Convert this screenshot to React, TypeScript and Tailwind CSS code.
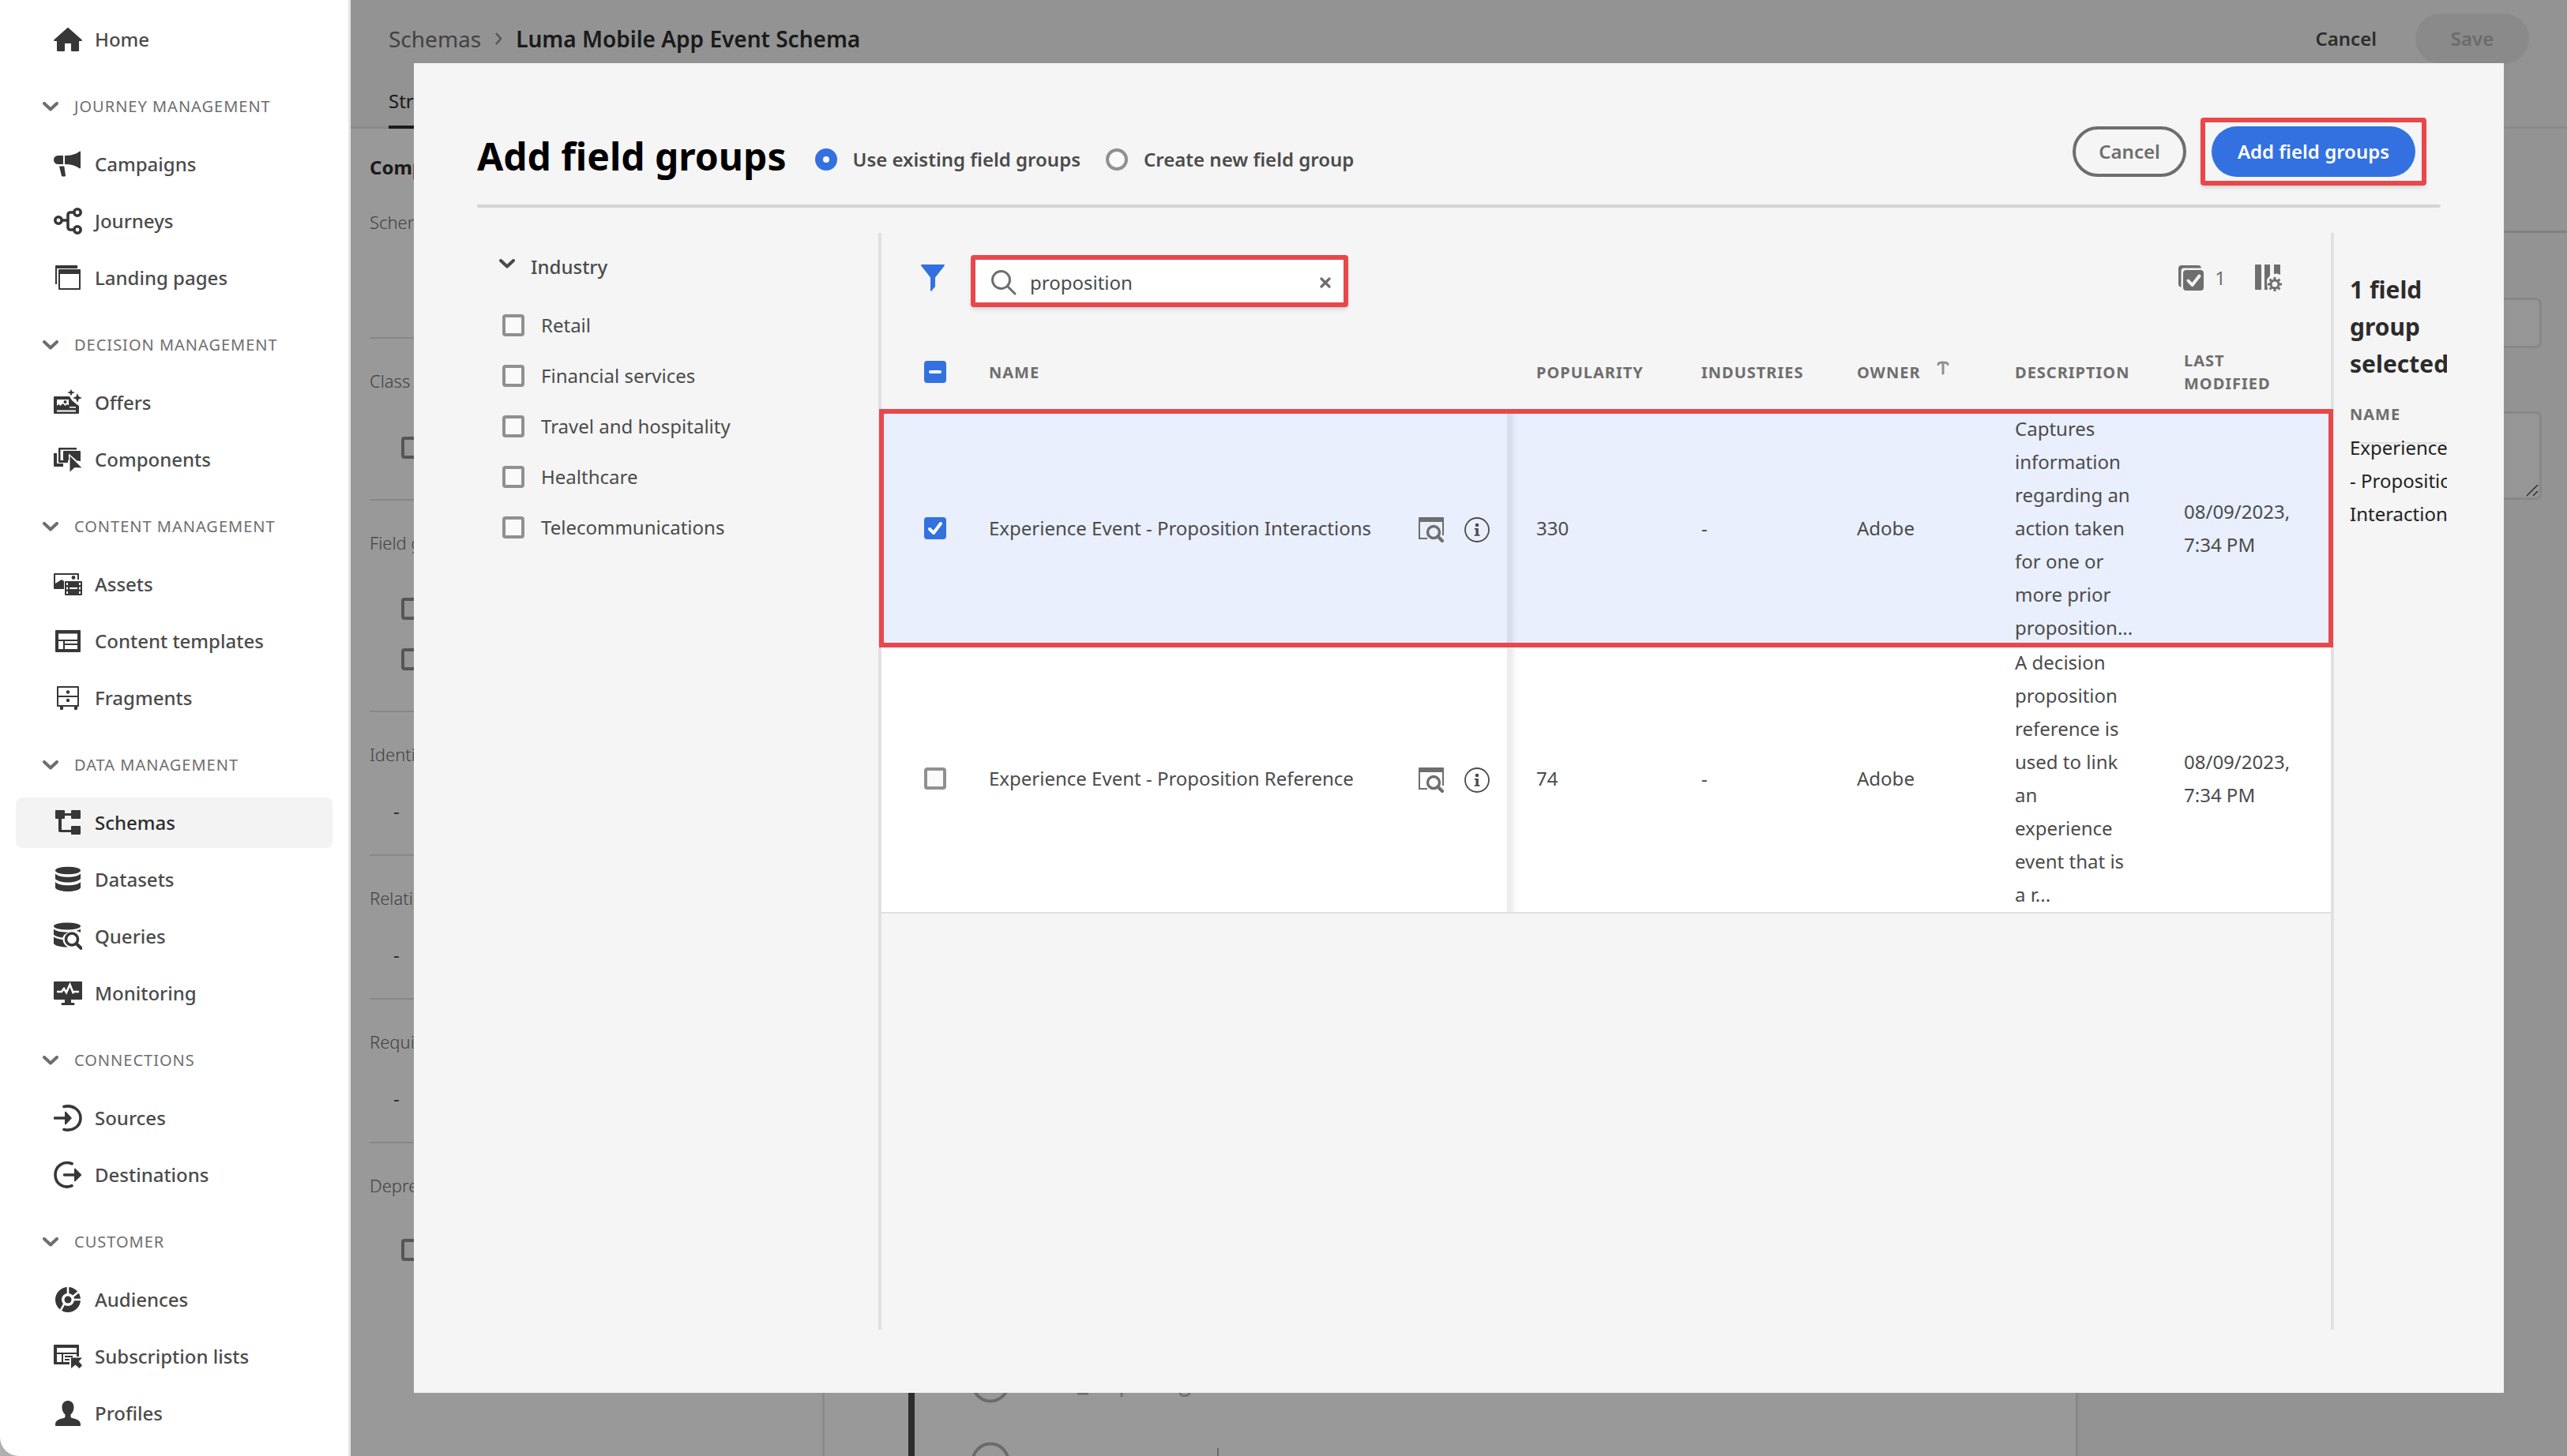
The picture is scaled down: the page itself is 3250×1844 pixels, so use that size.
import React from "react";

type IconProps = { className?: string };
type Icon = (p: IconProps) => React.ReactElement;

const make =
  (children: React.ReactNode): Icon =>
  ({ className = "size-9 shrink-0 text-[#373737]" }) => (
    <svg viewBox="0 0 36 36" className={className} fill="currentColor" aria-hidden="true">
      {children}
    </svg>
  );

const HomeIcon = make(<path d="M18.6 3.3a1 1 0 0 0-1.3 0L.5 18.2c-.7.7-.3 1.8.7 1.8H4v12a1 1 0 0 0 1 1h8a1 1 0 0 0 1-1v-9h8v9a1 1 0 0 0 1 1h8a1 1 0 0 0 1-1V20h2.8c1 0 1.400-1.100.7-1.800z" />);
const CampaignsIcon = make(
  <>
    <path d="M12 7H5.500a5.500 5.500 0 0 0 0 11H12z" />
    <path d="M14 7c7.500 0 14-1.500 18.700-5.300.6-.4 1.300 0 1.300.7v20.200c0 .7-.7 1-1.300.6C28 19.800 21.500 18 14 18z" />
    <path d="M7 20.500h6.300l1.700 12a.9.9 0 0 1-.9 1H11a1 1 0 0 1-1-.8z" />
  </>
);
const JourneysIcon = make(
  <g fill="none" stroke="currentColor" strokeWidth="3.600">
    <circle cx="6" cy="17" r="4.200" />
    <circle cx="30" cy="7" r="4.200" />
    <circle cx="30" cy="29" r="4.200" />
    <path d="M10 17h8M26 7h-5a3 3 0 0 0-3 3v16a3 3 0 0 0 3 3h5" />
  </g>
);
const LandingIcon = make(
  <>
    <path d="M2 26V3a1 1 0 0 1 1-1h27v4H4v20z" />
    <path fillRule="evenodd" d="M7 7h26a1 1 0 0 1 1 1v24a1 1 0 0 1-1 1H7a1 1 0 0 1-1-1V8a1 1 0 0 1 1-1zm1 6v18h24V13z" />
  </>
);
const OffersIcon = make(
  <>
    <path d="M1 10h19l3 5 6 5 3 2v9a1 1 0 0 1-1 1H1a1 1 0 0 1-1-1V11a1 1 0 0 1 1-1z" />
    <path fill="#fff" d="M4 14h15v7.500l-2-1.500-2.500 2-3-3-3 3-2-2L4 22zM4 27.500h24v2H4zM20 23h8v1.500h-8z" />
    <circle cx="14.500" cy="17" r="2" />
    <path d="M22 1l1.500 3 3.500 1-3.500 1.300L22 9.500l-1.500-3.200L17 5l3.500-1zM30 6l1.700 4.200L36 12l-4.300 1.500L30 18l-1.700-4.500L24 12l4.300-1.800z" />
  </>
);
const ComponentsIcon = make(
  <>
    <path d="M0 10h4v13h8v4H1a1 1 0 0 1-1-1z" />
    <path d="M6 21V4a1 1 0 0 1 1-1h22v2.500H8.500V19H18v3H7a1 1 0 0 1-1-1z" />
    <path d="M13 7h20a1 1 0 0 1 1 1v12l-4.500-.5L19 10.500V19h-6a1 1 0 0 1-1-1V8a1 1 0 0 1 1-1z" />
    <path d="M20.500 13.500v20l6-5.500 9 .5z" />
  </>
);
const AssetsIcon = make(
  <>
    <path fillRule="evenodd" d="M1 4h30a1 1 0 0 1 1 1v7h-2V6H2v11l8-5 3 2v10H1a1 1 0 0 1-1-1V5a1 1 0 0 1 1-1z" />
    <circle cx="25" cy="9.500" r="2.400" />
    <path d="M15 14h20a1 1 0 0 1 1 1v16a1 1 0 0 1-1 1H15a1 1 0 0 1-1-1V15a1 1 0 0 1 1-1z" />
    <path fill="#fff" d="M16 16h2v3h-2zM16 21.500h2v3h-2zM16 27h2v3h-2zM32 16h2v3h-2zM32 21.500h2v3h-2zM32 27h2v3h-2zM20 22h10v2H20z" />
  </>
);
const TemplatesIcon = make(
  <path fillRule="evenodd" d="M3 4h30a1 1 0 0 1 1 1v26a1 1 0 0 1-1 1H3a1 1 0 0 1-1-1V5a1 1 0 0 1 1-1zm3 4.500V16h24V8.500zM6 18v10h6V18zm8 0v3h16v-3zm0 5v5h16v-5z" />
);
const FragmentsIcon = make(
  <>
    <path fillRule="evenodd" d="M5 3h26a1 1 0 0 1 1 1v24a1 1 0 0 1-1 1h-1v3a1 1 0 0 1-1 1h-2a1 1 0 0 1-1-1v-3H12v3a1 1 0 0 1-1 1H9a1 1 0 0 1-1-1v-3H5a1 1 0 0 1-1-1V4a1 1 0 0 1 1-1zm1 2v10h24V5zm0 12v10h24V17z" />
    <circle cx="18" cy="10.500" r="2.200" />
    <circle cx="18" cy="21" r="2.200" />
  </>
);
const SchemasIcon = make(
  <>
    <path d="M3 2h10a1 1 0 0 1 1 1v3h8V3a1 1 0 0 1 1-1h10a1 1 0 0 1 1 1v9a1 1 0 0 1-1 1H23a1 1 0 0 1-1-1V9h-8v3a1 1 0 0 1-1 1h-3v14h12v-4a1 1 0 0 1 1-1h10a1 1 0 0 1 1 1v9a1 1 0 0 1-1 1H23a1 1 0 0 1-1-1v-2H8a2 2 0 0 1-2-2V13H3a1 1 0 0 1-1-1V3a1 1 0 0 1 1-1z" />
  </>
);
const DatasetsIcon = make(
  <>
    <ellipse cx="18" cy="6.500" rx="16" ry="4.800" />
    <path d="M2 10.500c3 3 9 4.300 16 4.300s13-1.300 16-4.300V17c-2 2.700-8.500 4.500-16 4.500S4 19.700 2 17z" />
    <path d="M2 21c3 3 9 4.300 16 4.300S31 24 34 21v7.500c-2 2.800-8.500 4.500-16 4.500S4 31.300 2 28.500z" />
  </>
);
const QueriesIcon = make(
  <>
    <ellipse cx="17" cy="5" rx="17" ry="4.500" />
    <path d="M0 8.500c3 3 9.500 4 17 4h2c-4 1.500-7 4-7.500 7C6 19 1.500 17.500 0 15.500zM34 8.500V13c-1.500-1-3.500-1.700-6-2 2.500-.5 4.500-1.300 6-2.500zM0 18.500c2.500 2 7 3.200 11.500 3.400.3 4 2.500 7.600 6.500 9.600C9 31.600 2 30 0 27z" />
    <circle cx="23" cy="21.500" r="7.500" fill="none" stroke="currentColor" strokeWidth="3.600" />
    <path d="M28.500 27l6 5.800" stroke="currentColor" strokeWidth="4.200" strokeLinecap="round" />
  </>
);
const MonitoringIcon = make(
  <>
    <path d="M1 3h34a1 1 0 0 1 1 1v21a1 1 0 0 1-1 1H22v4h3a1.500 1.500 0 0 1 1.500 1.500c0 1-.5 1.500-1.500 1.500H11c-1 0-1.500-.5-1.500-1.500A1.500 1.500 0 0 1 11 30h3v-4H1a1 1 0 0 1-1-1V4a1 1 0 0 1 1-1z" />
    <path d="M4 16h6l3-4 3 5 4.500-10 4 10 1.500-1h6" fill="none" stroke="#fff" strokeWidth="2.600" />
  </>
);
const SourcesIcon = make(
  <>
    <path d="M13 3.500c11-2.500 21 4 21 14.500S24 35 13 32.500" fill="none" stroke="currentColor" strokeWidth="3.600" strokeLinecap="round" />
    <path d="M1.500 16.200H14v-5.400c0-.9 1-1.300 1.600-.7L23 18l-7.400 7.900c-.6.600-1.600.200-1.600-.700v-5.400H1.500a1.800 1.800 0 0 1 0-3.600z" />
  </>
);
const DestinationsIcon = make(
  <>
    <path d="M23 3.800C12-.5 2 7 2 18s10 18 21 13.800" fill="none" stroke="currentColor" strokeWidth="3.600" strokeLinecap="round" />
    <path d="M13.500 16.200H26v-5.400c0-.9 1-1.300 1.600-.7L35.500 18l-7.900 7.900c-.6.600-1.600.200-1.600-.700v-5.400H13.500a1.800 1.800 0 0 1 0-3.600z" />
  </>
);
const AudiencesIcon = make(
  <>
    <circle cx="18" cy="18" r="12" fill="none" stroke="currentColor" strokeWidth="8" />
    <circle cx="18" cy="18" r="4.500" />
    <path d="M18 0v12M23 15l10-8M24 18h12M14 22l-6 11" stroke="#fff" strokeWidth="2.600" fill="none" />
  </>
);
const SubscriptionIcon = make(
  <>
    <path fillRule="evenodd" d="M1 3h30a1 1 0 0 1 1 1v14h-3v-3H4v10h6v3H1a1 1 0 0 1-1-1V4a1 1 0 0 1 1-1zm3 4v6h25V7z" />
    <path d="M10 15h2v10h8v3H8v-3h2zM14 17h10v2H14zM14 21h6v2h-6z" />
    <path d="M22 19.500h14l-4.300 4.700 4.300 5-3.500 3.800-5-4.500L22 33z" />
  </>
);
const ProfilesIcon = make(
  <path d="M18 2c4.800 0 7.500 3.500 7.500 8.500 0 3.300-1.500 7-4 9V22c.2 1 .6 1.600 2 2 5.500 1.200 10.500 3 10.500 8v1a1 1 0 0 1-1 1H3a1 1 0 0 1-1-1v-1c0-5 5-6.800 10.500-8 1.400-.4 1.800-1 2-2v-2.500c-2.500-2-4-5.700-4-9C10.500 5.500 13.200 2 18 2z" />
);

const Chevron = ({ className }: IconProps) => (
  <svg viewBox="0 0 20 12" className={className} fill="none" stroke="currentColor" strokeWidth="4" strokeLinecap="round" strokeLinejoin="round" aria-hidden="true">
    <path d="M2 2l8 7.500L18 2" />
  </svg>
);

const groups: { title?: string; items: [string, Icon][] }[] = [
  { items: [["Home", HomeIcon]] },
  { title: "JOURNEY MANAGEMENT", items: [["Campaigns", CampaignsIcon], ["Journeys", JourneysIcon], ["Landing pages", LandingIcon]] },
  { title: "DECISION MANAGEMENT", items: [["Offers", OffersIcon], ["Components", ComponentsIcon]] },
  { title: "CONTENT MANAGEMENT", items: [["Assets", AssetsIcon], ["Content templates", TemplatesIcon], ["Fragments", FragmentsIcon]] },
  { title: "DATA MANAGEMENT", items: [["Schemas", SchemasIcon], ["Datasets", DatasetsIcon], ["Queries", QueriesIcon], ["Monitoring", MonitoringIcon]] },
  { title: "CONNECTIONS", items: [["Sources", SourcesIcon], ["Destinations", DestinationsIcon]] },
  { title: "CUSTOMER", items: [["Audiences", AudiencesIcon], ["Subscription lists", SubscriptionIcon], ["Profiles", ProfilesIcon]] },
];

function Sidebar() {
  return (
    <nav className="flex w-[444px] shrink-0 flex-col gap-2 rounded-bl-[24px] border-r-3 border-[#e4e4e4] bg-white px-5 pt-[18px]">
      {groups.map((g, i) => (
        <React.Fragment key={i}>
          {g.title && (
            <button className="mt-3 flex h-[66px] items-center gap-5 pl-[34px] text-left text-[20px] tracking-wider text-[#6e6e6e]">
              <Chevron className="h-3 w-5" />
              {g.title}
            </button>
          )}
          {g.items.map(([label, Glyph]) => (
            <a
              key={label}
              href="#"
              className={
                label === "Schemas"
                  ? "flex h-16 items-center gap-4 rounded-lg bg-[#f3f3f3] pl-12 text-[24px] font-medium text-[#2c2c2c]"
                  : "flex h-16 items-center gap-4 rounded-lg pl-12 text-[24px] font-medium text-[#4b4b4b]"
              }
            >
              <Glyph />
              {label}
            </a>
          ))}
        </React.Fragment>
      ))}
    </nav>
  );
}

function Check({ state = "off", label, hidden }: { state?: "off" | "on" | "mixed"; label: string; hidden?: boolean }) {
  return (
    <label className="flex items-center gap-[21px]">
      <span className="relative flex size-7 shrink-0">
        <input
          type="checkbox"
          aria-label={label}
          defaultChecked={state === "on"}
          className={
            state === "off"
              ? "size-7 appearance-none rounded-[4px] border-4 border-[#909090] bg-[#fafafa]"
              : "size-7 appearance-none rounded-[4px] bg-[#3371e0]"
          }
        />
        {state !== "off" && (
          <svg viewBox="0 0 28 28" className="pointer-events-none absolute inset-0" fill="none" stroke="#fff" strokeWidth="4" strokeLinecap="round" strokeLinejoin="round" aria-hidden="true">
            <path d={state === "on" ? "M7 15l5 5 9-12" : "M8 14h12"} />
          </svg>
        )}
      </span>
      {!hidden && label}
    </label>
  );
}

const Rule = () => <div className="h-[2px] bg-[#e1e1e1]" />;

function Backdrop() {
  const label = "flex h-[107px] items-center text-[22px] font-light text-[#6e6e6e]";
  return (
    <div className="flex flex-1 flex-col bg-[#f5f5f5]">
      <header className="flex h-[97px] items-center pr-12 pl-[48px] text-[28px]">
        <a href="#" className="text-[#6e6e6e]">Schemas</a>
        <svg viewBox="0 0 10 16" className="mx-[17px] h-4 w-[10px]" fill="none" stroke="#909090" strokeWidth="2.500" aria-hidden="true">
          <path d="M2 1l6 7-6 7" />
        </svg>
        <h1 className="font-semibold text-[#2c2c2c]">Luma Mobile App Event Schema</h1>
        <button className="ml-auto h-16 px-[49px] text-[24px] font-semibold text-[#4b4b4b]">Cancel</button>
        <button className="h-16 w-36 rounded-full bg-[#e6e6e6] text-[24px] font-semibold text-[#b3b3b3]">Save</button>
      </header>
      <div className="flex h-[66px] border-b-3 border-[#e6e6e6] pl-[48px]">
        <button className="h-[66px] border-b-4 border-[#2c2c2c] text-[24px] text-[#2c2c2c]">Structure</button>
      </div>
      <div className="flex flex-1">
        <aside className="w-[600px] shrink-0 border-r-3 border-[#e6e6e6] bg-white pl-6">
          <h2 className="flex h-[98px] items-center text-[24px] font-bold text-[#2c2c2c]">Composition</h2>
          <div className="flex h-[166px] items-start pt-1 text-[22px] font-light text-[#6e6e6e]">Schema</div>
          <Rule />
          <div className={label}>Class</div>
          <div className="flex h-[96px] items-start pt-[17px] pl-10"><Check label="Class selection" hidden /></div>
          <Rule />
          <div className={label}>Field groups</div>
          <div className="flex h-[159px] flex-col gap-9 pt-4 pl-10">
            <Check label="First field group" hidden />
            <Check label="Second field group" hidden />
          </div>
          {["Identities", "Relationships", "Required fields"].map((t) => (
            <React.Fragment key={t}>
              <Rule />
              <div className={label}>{t}</div>
              <div className="h-[73px] pl-[30px] text-[24px] text-[#4b4b4b]">-</div>
            </React.Fragment>
          ))}
          <Rule />
          <div className={label}>Deprecated fields</div>
          <div className="pt-[14px] pl-10"><Check label="Deprecated" hidden /></div>
        </aside>
        <div className="flex flex-1 items-end bg-white">
          <svg viewBox="0 0 600 80" className="h-20 w-[600px]" fill="none" stroke="#b3b3b3" aria-hidden="true">
            <path d="M110 0v80" stroke="#4b4b4b" strokeWidth="8" />
            <g strokeWidth="4">
              <circle cx="210" cy="-12" r="22.500" />
              <circle cx="210" cy="87" r="22.500" />
            </g>
            <path d="M320 1h14" strokeWidth="3" />
            <path d="M376 0v5M450 0c1 5 11 5 12 0" strokeWidth="2.500" />
            <path d="M498 70v10" strokeWidth="2" />
          </svg>
        </div>
        <aside className="w-[622px] shrink-0 border-l-3 border-[#e1e1e1]">
          <div className="h-[132px] border-b-3 border-[#d8d8d8]" />
          <div className="flex flex-col gap-20 pt-[82px] pr-8 pl-8">
            <input aria-label="Display name" className="h-16 w-full rounded-lg border-3 border-[#e1e1e1] bg-[#fafafa]" />
            <div className="relative flex">
              <textarea aria-label="Schema description" className="h-28 w-full resize-none rounded-lg border-3 border-[#e1e1e1] bg-[#fafafa]" />
              <svg viewBox="0 0 16 16" className="absolute right-1 bottom-1 size-4" stroke="#4b4b4b" strokeWidth="1.500" aria-hidden="true">
                <path d="M1 15L15 1M9 15l6-6" />
              </svg>
            </div>
          </div>
        </aside>
      </div>
    </div>
  );
}

function Radio({ label, checked }: { label: string; checked?: boolean }) {
  return (
    <label className="flex items-center gap-5 text-[24px] font-semibold text-[#4b4b4b]">
      <input
        type="radio"
        name="mode"
        defaultChecked={checked}
        className="size-7 appearance-none rounded-full border-4 border-[#909090] bg-[#fafafa] checked:border-[10px] checked:border-[#3371e0] checked:bg-white"
      />
      {label}
    </label>
  );
}

function PreviewIcon() {
  return (
    <svg viewBox="0 0 32 32" className="size-8" fill="none" aria-hidden="true">
      <path d="M0 1a1 1 0 0 1 1-1h30a1 1 0 0 1 1 1v5H0z" fill="#6e6e6e" />
      <path d="M1 5v22h10M31 5v18" stroke="#6e6e6e" strokeWidth="2" />
      <circle cx="19" cy="19" r="7.500" stroke="#6e6e6e" strokeWidth="3.400" />
      <path d="M24.500 24.500l5.500 5.500" stroke="#6e6e6e" strokeWidth="4.200" strokeLinecap="round" />
    </svg>
  );
}

function InfoIcon() {
  return (
    <svg viewBox="0 0 32 32" className="size-8" fill="#4b4b4b" aria-hidden="true">
      <circle cx="16" cy="16" r="15" fill="none" stroke="#4b4b4b" strokeWidth="1.800" />
      <circle cx="16" cy="10" r="2.300" />
      <path d="M12.800 14h5v8h1.700v1.800h-6.700V22h1.700v-6.200h-1.700z" />
    </svg>
  );
}

const rows = [
  { name: "Experience Event - Proposition Interactions", popularity: "330", description: "Captures information regarding an action taken for one or more prior proposition...", selected: true },
  { name: "Experience Event - Proposition Reference", popularity: "74", description: "A decision proposition reference is used to link an experience event that is a r...", selected: false },
];

function FieldGroupTable() {
  return (
    <table className="mt-8 w-full table-fixed border-collapse text-left">
      <colgroup>
        <col className="w-[136px]" />
        <col />
        <col className="w-[246px]" />
        <col className="w-[197px]" />
        <col className="w-[200px]" />
        <col className="w-[214px]" />
        <col className="w-[186px]" />
      </colgroup>
      <thead>
        <tr className="h-[100px] text-[20px] leading-[29px] tracking-wider text-[#6e6e6e] [&>th]:p-0 [&>th]:font-bold">
          <th><div className="pl-[54px]"><Check state="mixed" label="Select all" hidden /></div></th>
          <th>NAME</th>
          <th><div className="pl-[37px]">POPULARITY</div></th>
          <th>INDUSTRIES</th>
          <th>
            <div className="flex gap-5">
              OWNER
              <svg viewBox="0 0 16 18" className="h-[18px] w-4" fill="none" stroke="#909090" strokeWidth="3" strokeLinecap="round" aria-hidden="true">
                <path d="M8 16V3M2 4.500C2 3 4 2 8 2s6 1 6 2.500" />
              </svg>
            </div>
          </th>
          <th>DESCRIPTION</th>
          <th><div className="w-[140px]">LAST MODIFIED</div></th>
        </tr>
      </thead>
      <tbody className="border-b-2 border-[#e1e1e1]">
        {rows.map((r) => (
          <tr
            key={r.name}
            className={
              r.selected
                ? "bg-[#e9effc] text-[24px] leading-[42px] text-[#4b4b4b] outline-6 -outline-offset-3 outline-[#e8484b] [&>td]:p-0"
                : "bg-white text-[24px] leading-[42px] text-[#4b4b4b] [&>td]:p-0"
            }
          >
            <td><div className="pl-[54px]"><Check state={r.selected ? "on" : "off"} label={"Select " + r.name} hidden /></div></td>
            <td>
              <div className="flex items-center gap-[26px] pr-[22px]">
                <span className="mr-auto">{r.name}</span>
                <button aria-label="Preview" className="pt-1"><PreviewIcon /></button>
                <button aria-label="Information" className="pt-1"><InfoIcon /></button>
              </div>
            </td>
            <td className="bg-[linear-gradient(to_right,rgba(0,0,0,0.08)_0px,rgba(0,0,0,0.07)_5px,rgba(0,0,0,0.02)_10px,rgba(0,0,0,0)_16px)]"><div className="pl-[37px]">{r.popularity}</div></td>
            <td>-</td>
            <td>Adobe</td>
            <td><div className="w-[154px] py-px">{r.description}</div></td>
            <td>08/09/2023, 7:34 PM</td>
          </tr>
        ))}
      </tbody>
    </table>
  );
}

function Dialog() {
  return (
    <div role="dialog" aria-label="Add field groups" className="flex flex-1 flex-col bg-[#f5f5f5] px-20 pt-[69px] pb-20">
      <header className="flex items-center">
        <div className="flex items-center pt-5">
          <h2 className="mr-9 pb-2 text-[48px] leading-[56px] font-bold text-black">Add field groups</h2>
          <div className="flex gap-8">
            <Radio label="Use existing field groups" checked />
            <Radio label="Create new field group" />
          </div>
        </div>
        <button className="mr-[18px] ml-auto h-16 w-36 rounded-full border-4 border-[#6e6e6e] text-[24px] font-semibold text-[#6e6e6e]">Cancel</button>
        <div className="mr-[18px] rounded-[4px] border-6 border-[#e8484b] px-2 py-[5px] shadow-md">
          <button className="h-16 w-[258px] rounded-full bg-[#3371e0] text-[24px] font-semibold whitespace-nowrap text-white">Add field groups</button>
        </div>
      </header>
      <div className="mt-6 h-1 rounded-full bg-[#d5d5d5]" />
      <div className="-mr-2 flex flex-1 pt-8">
        <aside className="w-[508px] shrink-0 pt-[18px] pl-7 text-[24px] text-[#4b4b4b]">
          <button className="flex h-[50px] items-center gap-5 text-[24px] font-medium">
            <Chevron className="-mt-2 h-3 w-5" />
            Industry
          </button>
          <div className="mt-[17px] flex flex-col pl-1">
            {["Retail", "Financial services", "Travel and hospitality", "Healthcare", "Telecommunications"].map((t) => (
              <div key={t} className="flex h-16 items-center"><Check label={t} /></div>
            ))}
          </div>
        </aside>
        <section className="min-w-0 flex-1 border-x-4 border-[#e1e1e1] pt-7">
          <div className="flex items-start pl-[50px]">
            <div className="flex h-[58px] w-[63px] items-center">
              <button aria-label="Filter">
                <svg viewBox="0 0 30 34" className="h-[34px] w-[30px]" fill="#3371e0" aria-hidden="true">
                  <path d="M1 0h28c1 0 1.300.8.8 1.500L18 16.500V28l-4.600 5.500c-.5.600-1.400.300-1.400-.5V16.500L.2 1.500C-.3.800 0 0 1 0z" />
                </svg>
              </button>
            </div>
            <div className="flex h-[66px] w-[478px] items-center rounded-[4px] border-6 border-[#e8484b] bg-white pt-1 pr-4 pl-5 shadow-md">
              <svg viewBox="0 0 32 32" className="size-8 shrink-0" fill="none" stroke="#6e6e6e" strokeWidth="3" strokeLinecap="round" aria-hidden="true">
                <circle cx="12.500" cy="12.500" r="11" />
                <path d="M20.500 20.500L30 30" />
              </svg>
              <input aria-label="Search" defaultValue="proposition" className="ml-[17px] w-0 min-w-0 flex-1 bg-transparent text-[24px] text-[#4b4b4b] outline-none" />
              <button aria-label="Clear search">
                <svg viewBox="0 0 14 14" className="size-[14px]" stroke="#6e6e6e" strokeWidth="3.200" strokeLinecap="round" aria-hidden="true">
                  <path d="M2 2l10 10M12 2L2 12" />
                </svg>
              </button>
            </div>
            <div className="mr-[62px] ml-auto flex h-[58px] items-center text-[24px] text-[#6e6e6e]">
              <svg viewBox="0 0 32 32" className="size-8" fill="#6e6e6e" aria-hidden="true">
                <path d="M4 0h21a4 4 0 0 1 4 3.500H7A3.500 3.500 0 0 0 3.500 7v20.500A4 4 0 0 1 0 24V4a4 4 0 0 1 4-4z" />
                <rect x="6" y="6" width="26" height="26" rx="4" />
                <path d="M12.500 19.500l5 5.500 9-11.500" fill="none" stroke="#f5f5f5" strokeWidth="4" strokeLinecap="round" strokeLinejoin="round" />
              </svg>
              <span className="ml-[14px]">1</span>
              <button aria-label="Column settings" className="ml-[37px]">
                <svg viewBox="0 0 34 34" className="size-[34px]" fill="#6e6e6e" aria-hidden="true">
                  <path d="M1 0h6a1 1 0 0 1 1 1v31H1a1 1 0 0 1-1-1V1a1 1 0 0 1 1-1zM12 0h7v14l-4 5v5l1 8h-4zM24 0h7a1 1 0 0 1 1 1v12l-4-1.500-4 .5z" />
                  <circle cx="25" cy="25" r="5" fill="none" stroke="#6e6e6e" strokeWidth="3" />
                  <path d="M25 16v3M25 31v3M16 25h3M31 25h3M18.600 18.600l2.200 2.200M29.200 29.200l2.200 2.200M18.600 31.400l2.200-2.200M29.200 20.800l2.200-2.200" stroke="#6e6e6e" strokeWidth="3" />
                </svg>
              </button>
            </div>
          </div>
          <FieldGroupTable />
        </section>
        <aside className="w-[143px] shrink-0 overflow-hidden pt-12 pl-5">
          <h3 className="text-[30px] leading-[47px] font-bold text-[#2c2c2c]">1 field group selected</h3>
          <div className="mt-[26px] text-[20px] leading-[30px] font-bold tracking-wider text-[#6e6e6e]">NAME</div>
          <div className="mt-5 border-y-2 border-[#e1e1e1]">
            <div className="-mt-4 -mb-4 text-[24px] leading-[42px] whitespace-nowrap text-[#222]">
              <div>Experience</div>
              <div>- Proposition</div>
              <div>Interactions</div>
            </div>
          </div>
        </aside>
      </div>
    </div>
  );
}

export default function App() {
  return (
    <div className="flex min-h-screen bg-[#b0b0b0]" style={{ fontFamily: '"Noto Sans", sans-serif' }}>
      <Sidebar />
      <main className="relative flex min-w-0 flex-1 flex-col">
        <Backdrop />
        <div className="absolute inset-0 flex bg-black/40 p-20">
          <Dialog />
        </div>
      </main>
    </div>
  );
}
